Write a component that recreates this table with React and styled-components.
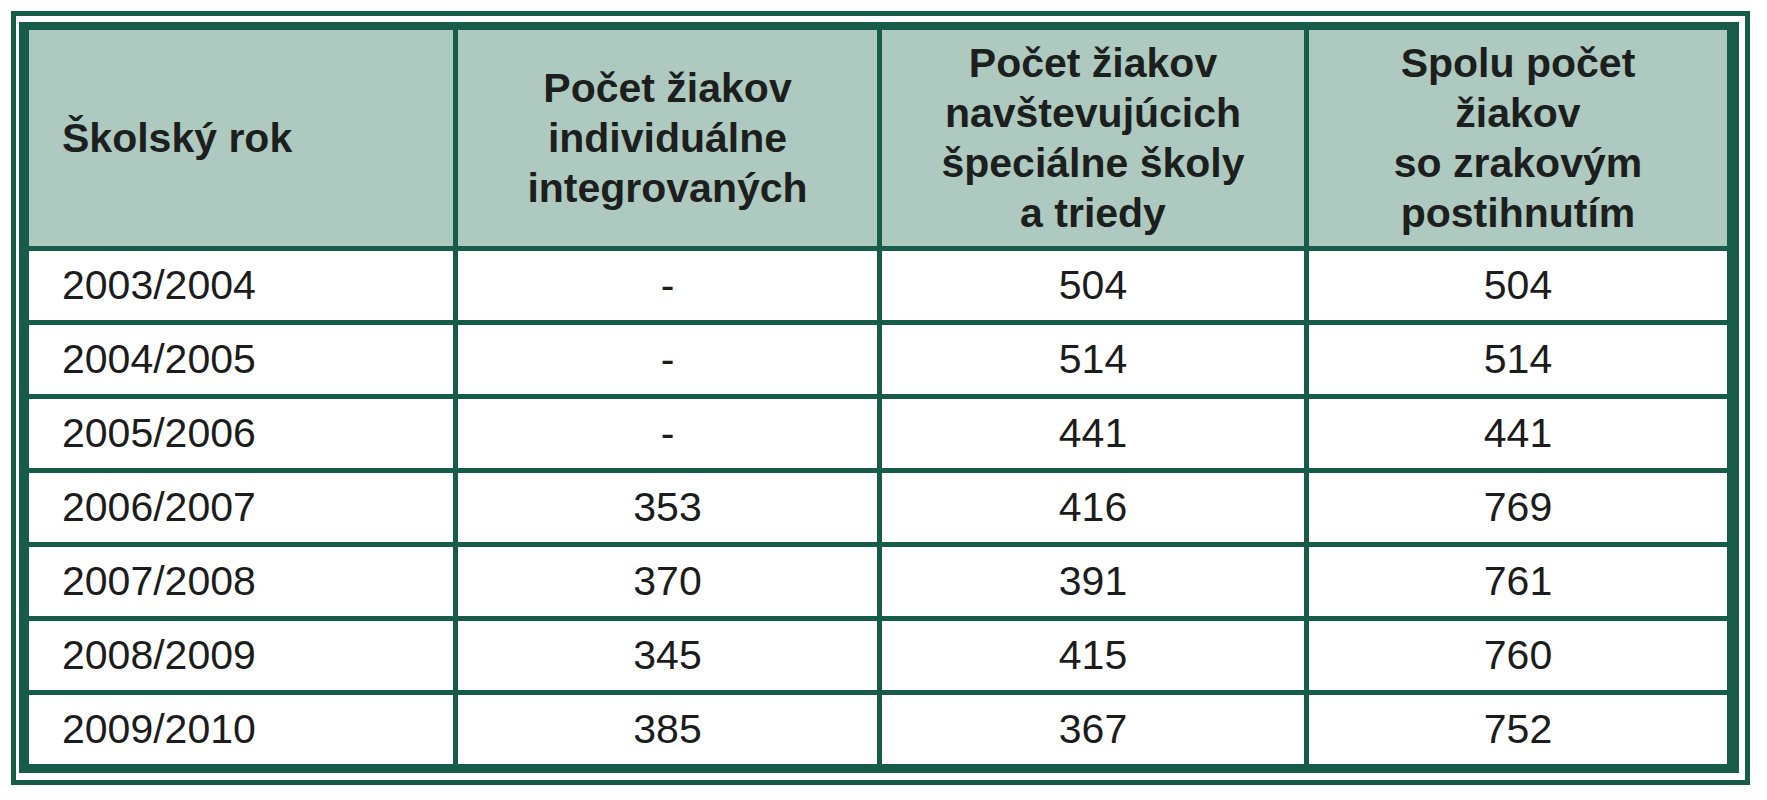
import React from "react";
import styled, { createGlobalStyle } from "styled-components";

const GlobalStyle = createGlobalStyle`
  html, body {
    margin: 0;
    padding: 0;
    background: #ffffff;
  }
  body {
    font-family: "Liberation Sans", Arial, sans-serif;
  }
`;

const rows = [
  ["2003/2004", "-", "504", "504"],
  ["2004/2005", "-", "514", "514"],
  ["2005/2006", "-", "441", "441"],
  ["2006/2007", "353", "416", "769"],
  ["2007/2008", "370", "391", "761"],
  ["2008/2009", "345", "415", "760"],
  ["2009/2010", "385", "367", "752"],
];

const headers = [
  ["Školský rok"],
  ["Počet žiakov", "individuálne", "integrovaných"],
  ["Počet žiakov", "navštevujúcich", "špeciálne školy", "a triedy"],
  ["Spolu počet", "žiakov", "so zrakovým", "postihnutím"],
];

const App = () => {
  return (
    <Page>
      <GlobalStyle />
      <Frame>
        <Table>
          {headers.map((lines, i) => (
            <HeaderCell key={i} $align={i === 0 ? "left" : "center"}>
              {lines.map((line, j) => (
                <span key={j}>{line}</span>
              ))}
            </HeaderCell>
          ))}
          {rows.map((row, r) =>
            row.map((value, c) => (
              <Cell key={r + "-" + c} $align={c === 0 ? "left" : "center"}>
                {value}
              </Cell>
            ))
          )}
        </Table>
      </Frame>
    </Page>
  );
};

export default App;

const Page = styled.div`
  padding: 11px 0 0 11px;
  width: 1767px;
  height: 800px;
  box-sizing: border-box;
`;

const Frame = styled.div`
  box-sizing: border-box;
  width: 1739px;
  height: 774px;
  border: 5px solid #165c49;
  padding: 6px 6px 4px 3px;
  background: #ffffff;
`;

const Table = styled.div`
  box-sizing: border-box;
  width: 1720px;
  height: 751px;
  display: grid;
  grid-template-columns: 424px 419px 422px 418px;
  grid-template-rows: 216px repeat(7, 69px);
  column-gap: 5px;
  row-gap: 5px;
  background: #165c49;
  border-style: solid;
  border-color: #165c49;
  border-width: 8px 12px 7px 10px;
  box-shadow: inset -5px 0 0 -3px #165c49;
`;

const HeaderCell = styled.div`
  background: #aec9bf;
  display: flex;
  flex-direction: column;
  justify-content: center;
  align-items: ${(p) => (p.$align === "left" ? "flex-start" : "center")};
  padding: ${(p) => (p.$align === "left" ? "0 0 0 33px" : "0")};
  font-weight: bold;
  font-size: 41px;
  line-height: 50px;
  color: #1c1f1d;
  text-align: ${(p) => p.$align};
`;

const Cell = styled.div`
  background: #ffffff;
  display: flex;
  align-items: center;
  justify-content: ${(p) => (p.$align === "left" ? "flex-start" : "center")};
  padding: ${(p) => (p.$align === "left" ? "0 0 0 33px" : "0")};
  font-size: 41px;
  color: #1c1c1c;
`;
